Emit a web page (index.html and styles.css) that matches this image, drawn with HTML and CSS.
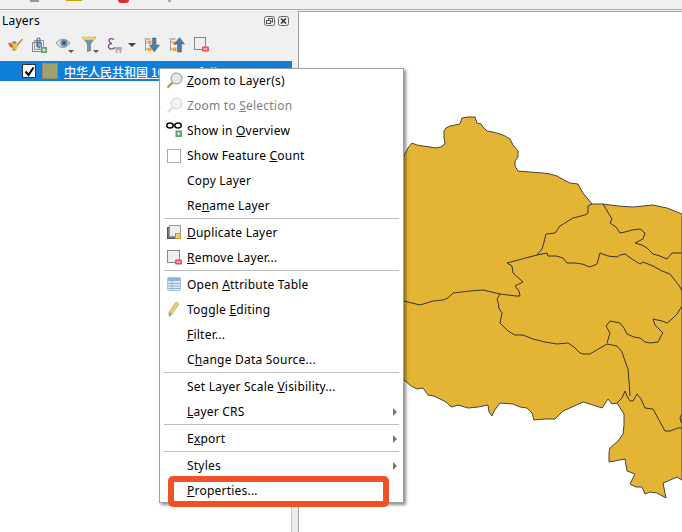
FILE: index.html
```html
<!DOCTYPE html>
<html lang="en">

<head>
    <meta charset="UTF-8">
    <title>Layers</title>
    <link rel="stylesheet" href="styles.css">
</head>

<body>
    <div class="top-toolbar">
        <span class="top-bit bit-gray"></span>
        <span class="top-bit bit-gold"></span>
        <span class="top-bit bit-red"></span>
        <span class="top-bit bit-small"></span>
    </div>

    <div class="main">
        <div class="layers">
            <div class="dock-title">
                <span>Layers</span>
                <div class="dock-buttons">
                    <svg width="11" height="10" viewBox="0 0 11 10"><rect x="0.500" y="0.500" width="10" height="9" rx="2" fill="none" stroke="#666"/><rect x="4.500" y="2.500" width="4" height="3.500" fill="none" stroke="#555"/><rect x="2.500" y="4.500" width="4" height="3" fill="#f0f0f0" stroke="#555"/></svg>
                    <svg width="11" height="10" viewBox="0 0 11 10"><rect x="0.500" y="0.500" width="10" height="9" rx="2" fill="none" stroke="#666"/><path d="M3 2.500l5 5M8 2.500l-5 5" stroke="#333" stroke-width="1.600"/></svg>
                </div>
            </div>

            <div class="dock-tools">
                <svg class="tool t-brush" width="16" height="16" viewBox="0 0 16 16"><path d="M9 8l6-6.500 1 1-5.500 6.500z" fill="#b98a3c"/><path d="M1 6l5-1 5 4-2 5z" fill="#e8c23c"/><path d="M1 6l4 1 1 4-3-1z" fill="#d8503c"/><path d="M6 11l3 3-4-1z" fill="#a57a50"/><path d="M5 5l3-1 2 2-3 1z" fill="#5a86c0"/></svg>
                <svg class="tool t-group" width="15" height="16" viewBox="0 0 15 16"><rect x="0.500" y="5.500" width="9" height="9" fill="#eee" stroke="#888"/><rect x="2.500" y="3.500" width="9" height="9" fill="none" stroke="#999"/><path d="M5 10V2.500a1.500 1.500 0 0 1 3 0V10a1 1 0 0 1-2 0V4" fill="none" stroke="#3f6f9f" stroke-width="1.200"/><rect x="9" y="10" width="6" height="6" fill="#6aa36a"/><path d="M12 11.500v3M10.500 13h3" stroke="#fff"/></svg>
                <svg class="tool t-eye" width="18" height="16" viewBox="0 0 18 16"><path d="M0 6c4-5 10-5 14 0-4 6-10 6-14 0z" fill="#d9d9d9" stroke="#999"/><circle cx="8" cy="6" r="3.500" fill="#5f88ad"/><circle cx="8" cy="6" r="1.300" fill="#27425e"/><path d="M12 13h6l-3 3z" fill="#555"/></svg>
                <svg class="tool t-filter" width="17" height="17" viewBox="0 0 17 17"><path d="M0 1h14L9 8v7l-4 1V8z" fill="#7094b5"/><path d="M0 1h14l-2 3H2z" fill="#efdc6a" stroke="#b0a040" stroke-width="0.500"/><path d="M11 14h6l-3 3z" fill="#555"/></svg>
                <svg class="tool t-expr" width="16" height="16" viewBox="0 0 16 16"><path d="M7 2.500C4 .5 1 2 2.500 5 3 6 4 6.500 5 6.500 3 6.500 1 7.500 1.500 10 2.500 13 6 12.500 8 10.500" fill="none" stroke="#7b4b86" stroke-width="1.300"/><path d="M8 10h7l-1 6h-1.500v-3h-2v3H9z" fill="#aaa"/></svg>
                <span class="tool-arrow"></span>
                <svg class="tool t-expand" width="16" height="16" viewBox="0 0 16 16"><path d="M1.500 2v12M1.500 5H5M1.500 12H5" stroke="#999" fill="none"/><rect x="0.500" y="1" width="6" height="2" fill="#bbb"/><rect x="4" y="3.500" width="3.500" height="3.500" fill="#f0a030"/><rect x="4" y="10.500" width="3.500" height="3.500" fill="#f0a030"/><path d="M8.500 1h3.500v7h3.500L10.250 15 5.500 8H8.500z" fill="#4d7ea8" stroke="#2e5a80" stroke-width="0.500"/></svg>
                <svg class="tool t-collapse" width="16" height="16" viewBox="0 0 16 16"><path d="M1.500 2v12M1.500 5H5M1.500 12H5" stroke="#999" fill="none"/><rect x="0.500" y="1" width="6" height="2" fill="#bbb"/><rect x="4" y="4.500" width="3.500" height="3.500" fill="#f0a030"/><rect x="4" y="10.500" width="3.500" height="3.500" fill="#f0a030"/><path d="M10.500 0.500L15.500 7H12.500V15H8.500V7H5.500z" fill="#4d7ea8" stroke="#2e5a80" stroke-width="0.500"/></svg>
                <svg class="tool t-remove" width="15" height="16" viewBox="0 0 15 16"><rect x="0.500" y="0.500" width="11" height="12" fill="#eee" stroke="#888"/><rect x="8" y="9.500" width="7" height="5" rx="1" fill="#e8505a"/><rect x="9.500" y="11.500" width="4" height="1" fill="#fff"/></svg>
            </div>

            <div class="tree">
                <div class="layer-row">
                    <span class="layer-check">
                        <svg width="11" height="11" viewBox="0 0 11 11"><path d="M1.500 5.500L4.500 9 9.500 1.500" fill="none" stroke="#000" stroke-width="2"/></svg>
                    </span>
                    <span class="layer-swatch"></span>
                    <span class="layer-name">中华人民共和国 100000_full</span>
                </div>
            </div>
        </div>

        <div class="splitter"></div>

        <div class="canvas">
            <svg class="map" width="383" height="521" viewBox="299 11 383 521">
                <path class="land" d="M380 155L404 155 408 147 412 142 417 144 423 145 430 146 435 147 441 146 445 143 444 136 444 130 446 127 450 125 460 123 462 117 468 116 475 116 477 122 481 123 483 126 487 130 493 131 500 133 505 135 510 138 513 144 518 150 518 156 515 160 515 165 518 170 530 171 543 172 550 173 557 175 564 179 570 182 578 183 583 192 592 203 603 203 618 205 633 206 653 204 667 207 682 213 682 479 677 476 668 480 663 482 666 497 657 492 650 491 645 493 642 486 636 486 630 483 635 473 627 470 625 458 609 461 609 452 610 447 618 440 623 433 624 424 624 413 617 402 612 403 608 398 602 407 593 404 583 401 572 406 563 410 555 418 545 418 534 419 532 412 527 407 520 406 513 403 500 402 494 410 492 415 489 411 488 404 478 406 468 407 458 404 452 406 450 405 446 401 438 397 434 395 428 394 423 387 417 388 411 385 404 379 380 370z"/>
                <path class="border" d="M592 203L588 205 588 212 585 214 573 217 560 225 555 232 546 233 544 241 542 248 537 254"/>
                <path class="border" d="M507 262L537 254 547 252 548 255 556 255 563 257 567 262 575 262 582 263 590 266 597 263 600 252 608 255 617 256 620 254 625 253 632 258 640 263 643 261 653 265 662 270 670 273 677 282 680 286 682 290"/>
                <path class="border" d="M507 262L512 265 513 272 523 281 515 285 519 290 520 295 516 295 500 293 483 289 470 290 453 292 448 297 443 299 433 300 420 304 408 301 404 300"/>
                <path class="border" d="M500 293L497 298 499 305 498 305 500 309 502 312 500 322 508 330 515 334 523 334 533 338 545 341 557 343 568 342 574 346 580 352 583 353 590 353 595 350 607 343 617 345 622 351 625 360 628 368 629 380 630 395"/>
                <path class="border" d="M607 342L610 332 606 325 610 320 620 322 624 327 627 333 634 336 640 337 645 341 650 342 658 341 661 335 663 332 655 324 653 318 662 320 667 322 672 318 677 313 682 305"/>
                <path class="border" d="M617 402L622 397 625 390 627 395 630 400 633 400 637 393 641 398 645 407 653 408 659 419 665 430 670 430 678 427 682 427"/>
                <path class="border" d="M603 203L612 218 610 222 616 226 620 232 625 231 632 229 640 228 645 232 643 238 635 242 642 244 647 247 653 253 660 255 667 258 672 252 682 252"/>
                <path class="border" d="M682 413L680 417 681 421 682 422"/>
            </svg>
        </div>
    </div>

    <div class="menu">
        <div class="menu-item"><span class="menu-icon"><svg width="17" height="17" viewBox="0 0 17 17"><circle cx="10.500" cy="6.500" r="5.500" fill="#e6e6e6" stroke="#8c8c8c"/><path d="M6.500 10.500L1.500 15.500" stroke="#b8902c" stroke-width="2.200"/></svg></span><span><u>Z</u>oom to Layer(s)</span></div>
        <div class="menu-item disabled"><span class="menu-icon"><svg width="17" height="17" viewBox="0 0 17 17"><circle cx="10.500" cy="6.500" r="5.500" fill="#f2f2f2" stroke="#d0d0d0"/><path d="M6.500 10.500L1.500 15.500" stroke="#e0e0d8" stroke-width="2.200"/></svg></span><span>Zoom to <u>S</u>election</span></div>
        <div class="menu-item"><span class="menu-icon"><svg width="17" height="17" viewBox="0 0 17 17"><ellipse cx="4" cy="3.500" rx="3.200" ry="2.500" fill="none" stroke="#111" stroke-width="1.500"/><ellipse cx="12" cy="3.500" rx="3.200" ry="2.500" fill="none" stroke="#111" stroke-width="1.500"/><path d="M7 3h2" stroke="#111"/><rect x="9.500" y="8.500" width="6.500" height="6.500" fill="#5ea46a"/><path d="M12.750 10v3.500M11 11.750h3.500" stroke="#fff"/></svg></span><span>Show in <u>O</u>verview</span></div>
        <div class="menu-item"><span class="menu-icon"><span class="menu-check"></span></span><span>Show Feature <u>C</u>ount</span></div>
        <div class="menu-item"><span class="menu-icon"></span><span>Copy Layer</span></div>
        <div class="menu-item"><span class="menu-icon"></span><span>Re<u>n</u>ame Layer</span></div>
        <div class="menu-sep"></div>
        <div class="menu-item"><span class="menu-icon"><svg width="17" height="17" viewBox="0 0 17 17"><rect x="1.500" y="3.500" width="11" height="11" fill="#777" stroke="#555"/><rect x="3.500" y="1.500" width="11" height="11" fill="#eee" stroke="#999"/><rect x="9.500" y="9.500" width="5" height="5" fill="#ecd060" stroke="#b89a30"/></svg></span><span><u>D</u>uplicate Layer</span></div>
        <div class="menu-item"><span class="menu-icon"><svg width="17" height="17" viewBox="0 0 17 17"><rect x="1.500" y="1.500" width="12" height="12" fill="#eee" stroke="#888"/><rect x="9" y="10.500" width="7" height="5" rx="1" fill="#e8505a"/><rect x="10.500" y="12.500" width="4" height="1" fill="#fff"/></svg></span><span><u>R</u>emove Layer...</span></div>
        <div class="menu-sep"></div>
        <div class="menu-item"><span class="menu-icon"><svg width="17" height="17" viewBox="0 0 17 17"><rect x="1.500" y="1.500" width="13" height="13" rx="1" fill="#dce8f5" stroke="#a8c4e0"/><rect x="2" y="2" width="12" height="3" fill="#8fb4da"/><path d="M2 7.500h12M2 10h12M2 12.500h12M6 5v9" stroke="#8fb4da"/></svg></span><span>Open <u>A</u>ttribute Table</span></div>
        <div class="menu-item"><span class="menu-icon"><svg width="17" height="17" viewBox="0 0 17 17"><path d="M10 1l3 2-7 10-3 2 0-3.500z" fill="#ecd070" stroke="#b8a050" stroke-width="0.700"/><path d="M3 11.500l3 1.500-3 3z" fill="#999"/></svg></span><span>Toggle <u>E</u>diting</span></div>
        <div class="menu-item"><span class="menu-icon"></span><span><u>F</u>ilter...</span></div>
        <div class="menu-item"><span class="menu-icon"></span><span>C<u>h</u>ange Data Source...</span></div>
        <div class="menu-sep"></div>
        <div class="menu-item"><span class="menu-icon"></span><span>Set Layer Scale <u>V</u>isibility...</span></div>
        <div class="menu-item has-sub"><span class="menu-icon"></span><span><u>L</u>ayer CRS</span></div>
        <div class="menu-sep"></div>
        <div class="menu-item has-sub"><span class="menu-icon"></span><span>E<u>x</u>port</span></div>
        <div class="menu-sep"></div>
        <div class="menu-item has-sub"><span class="menu-icon"></span><span>Styles</span></div>
        <div class="menu-item"><span class="menu-icon"></span><span><u>P</u>roperties...</span></div>
    </div>

    <div class="highlight"></div>
</body>

</html>
```
FILE: styles.css
```css
html,
body {
    height: 100%;
    margin: 0;
    overflow: hidden;
}

body {
    background: #f0f0f0;
    font-family: "Noto Sans", sans-serif;
    font-size: 12px;
    letter-spacing: 0.22px;
    color: #000;
    display: flex;
    flex-direction: column;
}

.top-toolbar {
    position: relative;
    height: 9px;
    border-bottom: 1px solid #ababab;
    margin-bottom: 1px;
    flex: none;
}

.top-bit {
    position: absolute;
    top: 0;
}

.bit-gray {
    left: 30px;
    width: 9px;
    height: 2px;
    background: #999;
}

.bit-gold {
    left: 66px;
    width: 16px;
    height: 1px;
    background: #c9a000;
}

.bit-red {
    left: 118px;
    width: 11px;
    height: 3px;
    background: #d83038;
    border-radius: 0 0 5px 5px;
}

.bit-small {
    left: 168px;
    width: 3px;
    height: 2px;
    background: #aab;
}

.main {
    flex: 1;
    display: flex;
    min-height: 0;
}

.layers {
    width: 292px;
    flex: none;
    display: flex;
    flex-direction: column;
}

.dock-title {
    height: 21px;
    padding: 0 2px 2px;
    box-sizing: border-box;
    display: flex;
    align-items: center;
    justify-content: space-between;
}

.dock-buttons {
    display: flex;
    gap: 3px;
    margin: 1px 1px 0 0;
}

.dock-tools {
    height: 29px;
    padding: 0 0 4px 7px;
    box-sizing: border-box;
    display: flex;
    align-items: center;
}

.tool {
    flex: none;
    margin-right: 9px;
}

.t-eye,
.t-filter {
    margin-right: 8px;
}

.t-expr {
    margin-right: 5px;
}

.tool-arrow {
    width: 0;
    height: 0;
    border: solid transparent;
    border-width: 4px 4px 0;
    border-top-color: #444;
    margin-right: 8px;
}

.tree {
    flex: 1;
    background: #fff;
    border-right: 1px solid #c8c8c8;
}

.layer-row {
    height: 20px;
    margin-right: -1px;
    background: #0f7fd9;
    display: flex;
    align-items: center;
    padding-left: 22px;
}

.layer-check {
    width: 12px;
    height: 12px;
    border: 1px solid #333;
    background: #fff;
    display: flex;
    align-items: center;
    justify-content: center;
}

.layer-swatch {
    width: 14px;
    height: 14px;
    margin-left: 6px;
    border: 1px solid #8b8b70;
    background: #9ea36c;
}

.layer-name {
    margin-left: 6px;
    color: #fff;
    font-family: "Noto Sans CJK SC", sans-serif;
    font-weight: 500;
    letter-spacing: 0;
    text-decoration: underline;
    white-space: nowrap;
}

.splitter {
    width: 6px;
    flex: none;
    background: linear-gradient(#f0f0f0 0, #f0f0f0 70px, #ececec 70px);
}

.canvas {
    flex: 1;
    min-width: 0;
    background: #fff;
    border-left: 1px solid #a0a0a0;
    border-top: 1px solid #a0a0a0;
}

.map {
    display: block;
}

.land {
    fill: #e4b535;
    stroke: #444;
    stroke-width: 1;
}

.border {
    fill: none;
    stroke: #333;
    stroke-width: 1;
}

.menu {
    position: absolute;
    left: 159px;
    top: 68px;
    width: 243px;
    background: #fff;
    border: 1px solid #a0a0a0;
    box-shadow: 2px 2px 3px rgba(0, 0, 0, 0.45);
}

.menu-item {
    position: relative;
    height: 25px;
    padding-bottom: 2px;
    box-sizing: border-box;
    display: flex;
    align-items: center;
    white-space: nowrap;
}

.menu-item:last-child {
    height: 23px;
    padding-bottom: 0;
}

.menu-icon {
    width: 21px;
    padding-left: 6px;
    flex: none;
    display: flex;
    align-items: center;
}

.menu-check {
    width: 12px;
    height: 12px;
    margin-left: 1px;
    border: 1px solid #aaa;
}

.disabled {
    color: #808080;
}

.has-sub::after {
    content: "";
    position: absolute;
    right: 6px;
    top: 8px;
    border: solid transparent;
    border-width: 4px 0 4px 4px;
    border-left-color: #777;
}

.menu-sep {
    height: 1px;
    margin: -1px 4px 2px 4px;
    background: #bdbdbd;
}

.highlight {
    position: absolute;
    left: 168px;
    top: 476px;
    width: 209px;
    height: 19px;
    border: 6px solid #f05228;
    border-radius: 5px;
}
```
